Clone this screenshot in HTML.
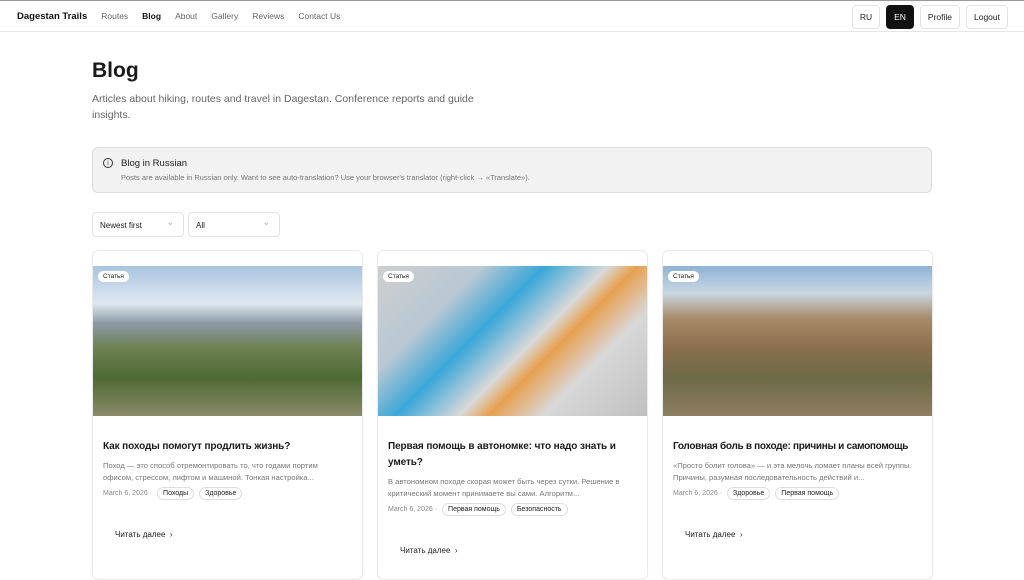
<!DOCTYPE html>
<html><head><meta charset="utf-8"><style>
*{box-sizing:border-box;margin:0;padding:0}
body{width:1024px;height:560px;overflow:hidden;background:#fff;font-family:"Liberation Sans",Arial,sans-serif;color:#1a1a1a;border-top:1px solid #999;position:relative}
.nav{height:31px;border-bottom:1px solid #e6e6e6;display:flex;align-items:center;padding-left:17px;font-size:8.5px;color:#666}
.nav b{color:#111;font-size:9.5px;margin-right:14px}
.nav span{margin-right:14px}
.nav .act{color:#111;font-weight:bold}
.btns{position:absolute;right:16px;top:4px;display:flex;gap:6px}
.btns div{height:24px;border:1px solid #e3e3e3;border-radius:4px;font-size:8.5px;display:flex;align-items:center;padding:0 7px;color:#222;background:#fff}
.btns .on{background:#111;color:#fff;border-color:#111}
h1{position:absolute;left:92px;top:58px;font-size:21px;font-weight:bold}
.sub{position:absolute;left:92px;top:91px;width:390px;font-size:10.5px;line-height:15.5px;color:#666}
.info{position:absolute;left:92px;top:146px;width:840px;height:46px;background:#f2f2f2;border:1px solid #ddd;border-radius:6px;padding:10px 0 0 28px}
.info .t{font-size:9.5px;color:#222}
.info .d{font-size:7.5px;color:#777;margin-top:4px}
.info i{position:absolute;left:10px;top:10px;width:10px;height:10px;border:1px solid #333;border-radius:50%;font-size:6.5px;font-style:normal;text-align:center;line-height:9px}
.sel{position:absolute;top:211px;height:25px;width:92px;border:1px solid #e3e3e3;border-radius:4px;font-size:8px;padding:8px 0 0 7px}
.sel:after{content:"⌄";position:absolute;right:9px;top:4px;color:#aaa;font-size:9px}
.card{position:absolute;top:249px;width:271px;height:330px;border:1px solid #eaeaea;border-radius:7px;overflow:hidden;box-shadow:0 1px 3px rgba(0,0,0,.04)}
.img{position:absolute;top:15px;left:0;width:100%;height:150px}
.badge{position:absolute;left:5px;top:20px;background:#fff;border-radius:8px;font-size:6.5px;padding:2px 5px}
.ct{position:absolute;left:10px;top:188px;width:255px;font-size:10px;font-weight:bold;line-height:16px;letter-spacing:-.1px}
.cx{position:absolute;left:10px;width:242px;font-size:7.6px;line-height:12px;color:#777}
.meta{position:absolute;left:10px;font-size:7px;color:#888;display:flex;align-items:center;gap:5px}
.meta span{border:1px solid #ddd;border-radius:8px;padding:2px 5px;color:#222}
.rd{position:absolute;left:22px;font-size:8px;color:#222}
</style></head><body>
<div class="nav"><b>Dagestan Trails</b><span>Routes</span><span class="act">Blog</span><span>About</span><span>Gallery</span><span>Reviews</span><span>Contact Us</span></div>
<div class="btns"><div>RU</div><div class="on">EN</div><div>Profile</div><div>Logout</div></div>
<h1>Blog</h1>
<div class="sub">Articles about hiking, routes and travel in Dagestan. Conference reports and guide insights.</div>
<div class="info"><i>i</i><div class="t">Blog in Russian</div><div class="d">Posts are available in Russian only. Want to see auto-translation? Use your browser's translator (right-click → «Translate»).</div></div>
<div class="sel" style="left:92px">Newest first</div>
<div class="sel" style="left:188px">All</div>

<div class="card" style="left:92px">
<div class="img" style="background:linear-gradient(180deg,#a9c4e0 0%,#dfe8f0 25%,#8d9aa6 38%,#6c8050 55%,#4f6a34 75%,#8a8a6a 100%)"></div>
<div class="badge">Статья</div>
<div class="ct">Как походы помогут продлить жизнь?</div>
<div class="cx" style="top:209px">Поход — это способ отремонтировать то, что годами портим офисом, стрессом, лифтом и машиной. Тонкая настройка...</div>
<div class="meta" style="top:236px">March 6, 2026 · <span>Походы</span><span>Здоровье</span></div>
<div class="rd" style="top:279px">Читать далее &nbsp;›</div>
</div>

<div class="card" style="left:377px">
<div class="img" style="background:linear-gradient(135deg,#cfcfcf 0%,#b8c8d4 25%,#3aa7d8 40%,#d9d9d9 55%,#e8a050 62%,#d8d8d8 75%,#c0c0c0 100%)"></div>
<div class="badge">Статья</div>
<div class="ct">Первая помощь в автономке: что надо знать и уметь?</div>
<div class="cx" style="top:225px">В автономном походе скорая может быть через сутки. Решение в критический момент принимаете вы сами. Алгоритм...</div>
<div class="meta" style="top:252px">March 6, 2026 · <span>Первая помощь</span><span>Безопасность</span></div>
<div class="rd" style="top:295px">Читать далее &nbsp;›</div>
</div>

<div class="card" style="left:662px">
<div class="img" style="background:linear-gradient(180deg,#8fb3d6 0%,#c9d7e2 18%,#a78a68 35%,#8a6f4e 55%,#6d6a45 75%,#8e7f62 100%)"></div>
<div class="badge">Статья</div>
<div class="ct" style="letter-spacing:-.3px">Головная боль в походе: причины и самопомощь</div>
<div class="cx" style="top:209px">«Просто болит голова» — и эта мелочь ломает планы всей группы. Причины, разумная последовательность действий и...</div>
<div class="meta" style="top:236px">March 6, 2026 · <span>Здоровье</span><span>Первая помощь</span></div>
<div class="rd" style="top:279px">Читать далее &nbsp;›</div>
</div>
</body></html>
